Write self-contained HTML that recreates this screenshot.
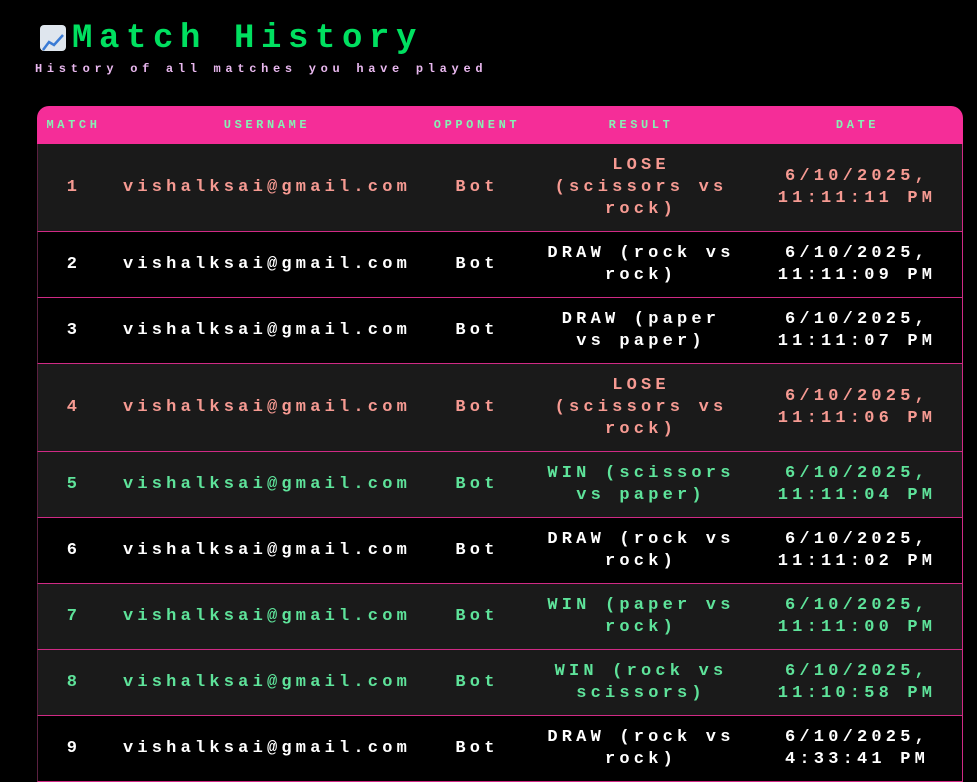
<!DOCTYPE html>
<html><head><meta charset="utf-8"><style>
body{margin:0;background:#000;width:977px;height:780px;overflow:hidden;font-family:"Liberation Mono",monospace;font-weight:bold;}
h1{position:absolute;left:40px;top:16px;margin:0;font-size:34px;letter-spacing:6.6px;color:#00e060;line-height:46px;}
h1 .ic{display:inline-block;width:26px;height:26px;background:#dfe6ee;border-radius:4px;vertical-align:-4px;margin-right:6px;position:relative;overflow:hidden}
.sub{position:absolute;left:35px;top:62px;font-size:12px;letter-spacing:4.7px;color:#e9b8ef;}
table{position:absolute;left:37px;top:106px;width:926px;border-collapse:separate;border-spacing:0;table-layout:fixed;}
th{background:#f52d98;color:#86f0b4;font-size:12px;letter-spacing:3.6px;height:38px;padding:0;text-align:center;}
th:first-child{border-top-left-radius:12px}th:last-child{border-top-right-radius:12px}
td{text-align:center;font-size:17px;letter-spacing:4.2px;line-height:22px;padding:0;border-bottom:1px solid #d02a85;color:#fff;}
td:first-child{border-left:1px solid #5a2040}td:last-child{border-right:1px solid #d02a85}
tr.d td{background:#1a1a1a}
tr.l td{color:#f69a92}tr.w td{color:#5ee39a}
tr.h1 td{height:87px}tr.h2 td{height:65px}
</style></head><body>
<h1><span class="ic"><svg width="26" height="26" viewBox="0 0 26 26"><path d="M3 20 L9 12 L14 15 L23 5" stroke="#3a7bd5" stroke-width="2.5" fill="none"/></svg></span>Match History</h1>
<div class="sub">History of all matches you have played</div>
<table>
<colgroup><col style="width:73px"><col style="width:314px"><col style="width:106px"><col style="width:222px"><col style="width:211px"></colgroup>
<tr><th>MATCH</th><th>USERNAME</th><th>OPPONENT</th><th>RESULT</th><th>DATE</th></tr>
<tr class="d l h1"><td>1</td><td>vishalksai@gmail.com</td><td>Bot</td><td>LOSE<br>(scissors vs<br>rock)</td><td>6/10/2025,<br>11:11:11 PM</td></tr>
<tr class="h2"><td>2</td><td>vishalksai@gmail.com</td><td>Bot</td><td>DRAW (rock vs<br>rock)</td><td>6/10/2025,<br>11:11:09 PM</td></tr>
<tr class="h2"><td>3</td><td>vishalksai@gmail.com</td><td>Bot</td><td>DRAW (paper<br>vs paper)</td><td>6/10/2025,<br>11:11:07 PM</td></tr>
<tr class="d l h1"><td>4</td><td>vishalksai@gmail.com</td><td>Bot</td><td>LOSE<br>(scissors vs<br>rock)</td><td>6/10/2025,<br>11:11:06 PM</td></tr>
<tr class="d w h2"><td>5</td><td>vishalksai@gmail.com</td><td>Bot</td><td>WIN (scissors<br>vs paper)</td><td>6/10/2025,<br>11:11:04 PM</td></tr>
<tr class="h2"><td>6</td><td>vishalksai@gmail.com</td><td>Bot</td><td>DRAW (rock vs<br>rock)</td><td>6/10/2025,<br>11:11:02 PM</td></tr>
<tr class="d w h2"><td>7</td><td>vishalksai@gmail.com</td><td>Bot</td><td>WIN (paper vs<br>rock)</td><td>6/10/2025,<br>11:11:00 PM</td></tr>
<tr class="d w h2"><td>8</td><td>vishalksai@gmail.com</td><td>Bot</td><td>WIN (rock vs<br>scissors)</td><td>6/10/2025,<br>11:10:58 PM</td></tr>
<tr class="h2"><td>9</td><td>vishalksai@gmail.com</td><td>Bot</td><td>DRAW (rock vs<br>rock)</td><td>6/10/2025,<br>4:33:41 PM</td></tr>
</table>
</body></html>
